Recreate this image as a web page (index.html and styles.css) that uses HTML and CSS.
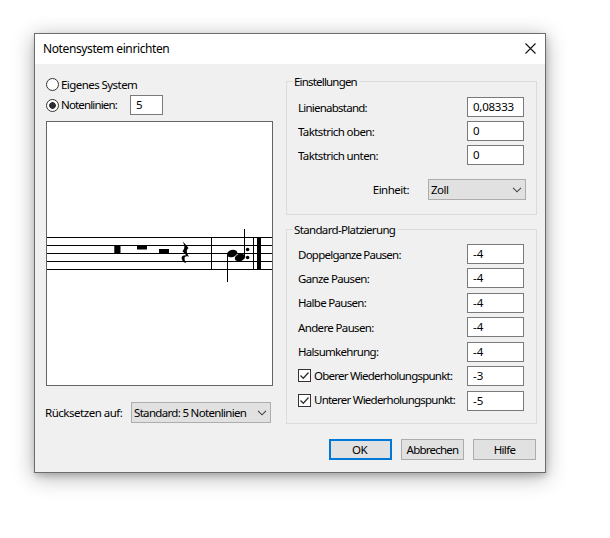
FILE: index.html
```html
<!DOCTYPE html>
<html lang="de">
<head>
<meta charset="utf-8">
<title>Notensystem einrichten</title>
<link rel="stylesheet" href="styles.css">
</head>
<body>
<main class="dialog">
  <header class="titlebar">
    <h1>Notensystem einrichten</h1>
    <svg class="close" width="11" height="11" viewBox="0 0 11 11"><path d="M.5.5l10 10M10.500.5l-10 10"/></svg>
  </header>
  <div class="content">
    <section class="left">
      <div class="radio"><i class="dot"></i><span class="t-own">Eigenes System</span></div>
      <div class="radio"><i class="dot on"></i><span class="t-lines">Notenlinien:</span><div class="field small">5</div></div>
      <div class="preview">
        <svg width="225" height="263" viewBox="47 122 225 263">
          <g shape-rendering="crispEdges">
            <path d="M47 237h225v1H47zM47 245h225v1H47zM47 253h225v1H47zM47 261h225v1H47zM47 269h225v1H47z"/>
            <path d="M211 237h1v33h-1zM253 237h1v33h-1zM257 237h4v33h-4zM227 254h1v28h-1zM244 229h1v28h-1z"/>
          </g>
          <path d="M114.300 246h6.200v7h-6.200zM137 245.500h10v4h-10zM159 249h10v4.500h-10z"/>
          <path d="M182.700 241.300C185 244 187.500 246.500 188.500 248C186.300 250.200 186 252 189 256.800C186 255.600 184.200 256.600 184.600 259.200C184.800 261 185.600 262.500 186.300 263.300C183.600 262.600 181.400 260 181.600 257.800C181.900 255.500 184.200 255 186.200 255.300C184.800 253.600 183.400 252.100 182.400 251.200C184.600 249 185.200 246.700 182.700 241.300z"/>
          <ellipse cx="232.100" cy="253.500" rx="5.300" ry="3.600" transform="rotate(-18 232.100 253.500)"/>
          <ellipse cx="240" cy="257.500" rx="5.300" ry="3.600" transform="rotate(-18 240 257.500)"/>
          <circle cx="247.600" cy="249.500" r="1.800"/><circle cx="247.600" cy="257.500" r="1.800"/>
        </svg>
      </div>
      <div class="reset"><span class="t-reset">Rücksetzen auf:</span><div class="select"><span class="t-std">Standard: 5 Notenlinien</span><svg width="10" height="6" viewBox="0 0 10 6"><path d="M1 .8l4 4 4-4"/></svg></div></div>
    </section>
    <section class="right">
      <fieldset class="settings">
        <legend class="t-settings">Einstellungen</legend>
        <div class="row"><span class="t-dist">Linienabstand:</span><div class="field"><span class="t-value">0,08333</span></div></div>
        <div class="row"><span class="t-top">Taktstrich oben:</span><div class="field">0</div></div>
        <div class="row"><span class="t-bottom">Taktstrich unten:</span><div class="field">0</div></div>
        <div class="unit"><span class="t-unit">Einheit:</span><div class="select"><span class="t-inch">Zoll</span><svg width="10" height="6" viewBox="0 0 10 6"><path d="M1 .8l4 4 4-4"/></svg></div></div>
      </fieldset>
      <fieldset class="placement">
        <legend class="t-place">Standard-Platzierung</legend>
        <div class="row"><span class="t-double">Doppelganze Pausen:</span><div class="field">-4</div></div>
        <div class="row"><span class="t-whole">Ganze Pausen:</span><div class="field">-4</div></div>
        <div class="row"><span class="t-half">Halbe Pausen:</span><div class="field">-4</div></div>
        <div class="row"><span class="t-other">Andere Pausen:</span><div class="field">-4</div></div>
        <div class="row"><span class="t-stem">Halsumkehrung:</span><div class="field">-4</div></div>
        <div class="row"><div class="check"><svg width="13" height="13" viewBox="0 0 13 13"><rect x=".5" y=".5" width="12" height="12"/><path d="M2.500 6.500l2.800 2.800 5.200-5.800"/></svg><span class="t-upper">Oberer Wiederholungspunkt:</span></div><div class="field">-3</div></div>
        <div class="row"><div class="check"><svg width="13" height="13" viewBox="0 0 13 13"><rect x=".5" y=".5" width="12" height="12"/><path d="M2.500 6.500l2.800 2.800 5.200-5.800"/></svg><span class="t-lower">Unterer Wiederholungspunkt:</span></div><div class="field">-5</div></div>
      </fieldset>
      <footer class="buttons"><div class="button primary">OK</div><div class="button"><span class="t-cancel">Abbrechen</span></div><div class="button"><span class="t-help">Hilfe</span></div></footer>
    </section>
  </div>
</main>
</body>
</html>
```

FILE: styles.css
```css
* { box-sizing: border-box; }
body { margin: 0; height: 538px; padding: 33px 0 0 34px; background: #fff; overflow: hidden; font: 11.500px/14px "Noto Sans", "Open Sans", sans-serif; letter-spacing: -.35px; color: #000; }
span, legend, h1 { white-space: nowrap; }
.dialog { width: 512px; height: 440px; border: 1px solid #6c6c6c; background: #f0f0f0; box-shadow: 0 4px 20px rgba(0,0,0,.32), 1px 3px 6px rgba(0,0,0,.16); }
.titlebar { height: 30px; background: #fff; display: flex; justify-content: space-between; align-items: center; padding: 0 9px 0 8px; }
h1 { margin: 0; font-size: 12px; font-weight: 400; line-height: 16px; letter-spacing: -.39px; }
.close { fill: none; stroke: #111; stroke-width: 1.100; margin-top: -2px; }
.content { display: flex; justify-content: space-between; padding: 12px 8px 0 11px; }
.left { width: 227px; }
.radio { display: flex; align-items: center; height: 20px; margin-top: -2px; }
.radio + .radio { margin-top: 1px; }
.dot { width: 13px; height: 13px; border: 1px solid #333; border-radius: 50%; background: #fff; margin-right: 2px; flex: none; }
.dot.on { background: radial-gradient(circle, #2d2d2d 0 3px, #fff 3.700px); }
.field { width: 57px; height: 20px; border: 1px solid #7a7a7a; background: #fff; padding: 2px 5px 0; flex: none; letter-spacing: 0; }
.field.small { width: 33px; margin-left: auto; margin-right: 110px; }
.preview { width: 227px; height: 265px; margin-top: 6px; border: 1px solid #646464; background: #fff; }
.preview svg { display: block; }
.reset { display: flex; justify-content: space-between; align-items: center; height: 21px; margin: 16px 2px 0 -1px; }
.select { width: 140px; height: 21px; border: 1px solid #adadad; background: #e1e1e1; display: flex; align-items: center; justify-content: space-between; padding: 0 3px 0 2px; }
.select svg { fill: none; stroke: #444; stroke-width: 1.100; }
.right { width: 251px; padding-top: 5px; }
fieldset { position: relative; border: 1px solid #dcdcdc; margin: 0; padding: 15px 12px 0 11px; }
legend { position: absolute; top: -7px; left: 6px; padding: 0 3px 0 1px; background: #f0f0f0; }
.settings { height: 134px; }
.row { display: flex; justify-content: space-between; align-items: center; height: 20px; margin-bottom: 4px; }
.row > span { padding-top: 1px; }
.unit { display: flex; justify-content: flex-end; align-items: center; margin: 14px -2px 0 0; }
.unit .select { width: 98px; margin-left: 19px; }
.placement { height: 195px; margin-top: 14px; padding-top: 14px; }
.placement .row { margin-bottom: 4.450px; }
.check { display: flex; align-items: center; gap: 3px; margin-top: -1px; }
.check svg { fill: #fff; stroke: #333; }
.check path { fill: none; stroke-width: 1.300; }
.buttons { display: flex; justify-content: flex-end; gap: 9px; margin: 15px 1px 0 0; }
.button { width: 63px; height: 21px; border: 1px solid #adadad; background: #e1e1e1; display: flex; align-items: center; justify-content: center; }
.primary { border: 2px solid #0078d7; padding-right: 2px; letter-spacing: -.5px; }
.t-own { letter-spacing: -.56px; padding-top: 1px; }
.t-lines { letter-spacing: -.85px; }
.t-settings { letter-spacing: -.81px; }
.t-dist, .t-double, .t-cancel { letter-spacing: -.76px; }
.t-top, .t-bottom { letter-spacing: -.6px; }
.t-whole, .t-other { letter-spacing: -.64px; }
.t-half, .t-stem { letter-spacing: -.7px; }
.t-upper, .t-lower { letter-spacing: -.77px; }
.t-reset { letter-spacing: -.48px; }
.t-std { letter-spacing: -.68px; }
.t-place, .t-help { letter-spacing: -.65px; }
.t-unit, .t-inch { letter-spacing: -.5px; }
.t-value { letter-spacing: -.25px; }
```
